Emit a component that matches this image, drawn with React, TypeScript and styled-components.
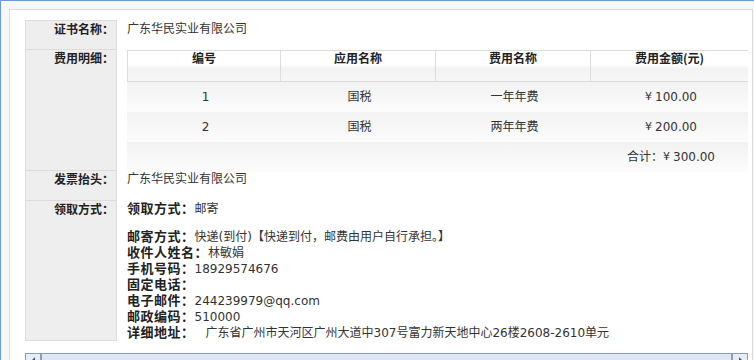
import styled, { createGlobalStyle } from 'styled-components';

type Fee = {
    no: number,
    app: string,
    name: string,
    amount: string
}

const fees: Fee[] = [
    { no: 1, app: '国税', name: '一年年费', amount: '100.00' },
    { no: 2, app: '国税', name: '两年年费', amount: '200.00' },
];

const contacts: [string, string][] = [
    ['邮寄方式：', '快递(到付)【快递到付，邮费由用户自行承担。】'],
    ['收件人姓名：', '林敏娟'],
    ['手机号码：', '18929574676'],
    ['固定电话：', ''],
    ['电子邮件：', '244239979@qq.com'],
    ['邮政编码：', '510000'],
];

const GlobalStyle = createGlobalStyle`
    html, body {
        margin: 0;
        padding: 0;
        background: #fff;
        overflow: hidden;
    }
    body {
        font-family: "DejaVu Sans", "Noto Sans CJK SC", sans-serif;
        font-size: 12px;
        color: #333;
    }
`;

const Frame = styled.div`
    width: 744px;
    padding: 8px;
    background: #f7f7f7;
    border-top: 1px solid #6b9bd6;
    border-left: 1px solid #6b9bd6;
`;

const Panel = styled.div`
    background: #fff;
    border: 1px solid #dcdcdc;
    padding: 10px 3px 0 15px;
`;

const Form = styled.div`
    display: grid;
    grid-template-columns: 92px 631px;
`;

const Label = styled.div<{ height: number, last?: boolean }>`
    height: ${props => props.height - 1}px;
    background: #eeeeee;
    border-top: 1px solid #dcdcdc;
    border-left: 1px solid #dcdcdc;
    border-right: 1px solid #dcdcdc;
    ${props => props.last ? 'border-bottom: 1px solid #dcdcdc;' : ''}
    box-sizing: content-box;
    padding: 0 2px 0 0;
    text-align: right;
    font-family: "Noto Sans CJK SC", sans-serif;
    font-weight: bold;
    font-size: 12px;
    line-height: 16px;
    color: #222;
    width: 88px;
`;

const Value = styled.div<{ height: number }>`
    height: ${props => props.height}px;
    padding: 0 0 0 10px;
    box-sizing: border-box;
    line-height: 16px;
    font-family: "Noto Sans CJK SC", sans-serif;
`;

const FeeTable = styled.div`
    width: 621px;
    margin-top: 1px;
    font-family: "DejaVu Sans", "Noto Sans CJK SC", sans-serif;
`;

const Grid = styled.div`
    display: grid;
    grid-template-columns: 153px 155px 155px 158px;
`;

const HeadRow = styled(Grid)`
    height: 30px;
    border-top: 1px solid #dcdcdc;
    border-bottom: 1px solid #dcdcdc;
    background: linear-gradient(#ffffff 0%, #ffffff 45%, #f3f3f3 60%, #f7f7f7 100%);
`;

const HeadCell = styled.div`
    border-left: 1px solid #dcdcdc;
    text-align: center;
    font-family: "Noto Sans CJK SC", sans-serif;
    font-weight: bold;
    font-size: 12px;
    line-height: 14px;
    color: #222;
`;

const BodyRow = styled(Grid)`
    height: 30px;
    background: linear-gradient(#f2f2f2, #fcfcfc);
`;

const Cell = styled.div<{ span?: number }>`
    grid-column: span ${props => props.span || 1};
    display: flex;
    align-items: center;
    justify-content: center;
    padding-left: 4px;
    color: #333;
    line-height: 14px;
`;

const Yen = styled.span`
    font-size: 11px;
    margin-right: 3px;
`;

// one "key: value" line of the delivery block, fixed to a 16px pitch
const Line = styled.div<{ gap?: number }>`
    display: flex;
    align-items: baseline;
    height: 16px;
    line-height: 16px;
    margin-top: ${props => props.gap || 0}px;
    white-space: nowrap;
`;

const Key = styled.b`
    font-size: 13px;
    letter-spacing: 0.5px;
    color: #222;
`;

const Text = styled.span<{ indent?: number }>`
    font-family: "DejaVu Sans", "Noto Sans CJK SC", sans-serif;
    font-size: 12px;
    margin-left: ${props => props.indent || 0}px;
`;

const Scrollbar = styled.div`
    display: flex;
    height: 17px;
    width: 723px;
    margin-top: 12px;
    border: 1px solid #8b9cbf;
    background: #dfe6f6;
    box-sizing: border-box;
`;

const ScrollButton = styled.div<{ side: 'left' | 'right' }>`
    width: 16px;
    flex: none;
    display: flex;
    justify-content: center;
    padding-top: 3px;
    box-sizing: border-box;
    background: #e7ecf7;
    ${props => props.side === 'left' ? 'border-right: 2px solid #8b9cbf;' : 'border-left: 2px solid #8b9cbf;'}
    &::after {
        content: '';
        width: 0;
        height: 0;
        border-top: 3px solid transparent;
        border-bottom: 3px solid transparent;
        ${props => props.side === 'left' ? 'border-right: 3px solid #4d5a78;' : 'border-left: 3px solid #4d5a78;'}
    }
`;

const Track = styled.div`
    flex: 1;
`;

const App = () => {
    return (
        <>
            <GlobalStyle />
            <Frame>
                <Panel>
                    <Form>
                        <Label height={29}>证书名称：</Label>
                        <Value height={29}>广东华民实业有限公司</Value>

                        <Label height={121}>费用明细：</Label>
                        <Value height={121}>
                            <FeeTable>
                                <HeadRow>
                                    <HeadCell>编号</HeadCell>
                                    <HeadCell>应用名称</HeadCell>
                                    <HeadCell>费用名称</HeadCell>
                                    <HeadCell>费用金额(元)</HeadCell>
                                </HeadRow>
                                {fees.map(fee => (
                                    <BodyRow key={fee.no}>
                                        <Cell>{fee.no}</Cell>
                                        <Cell>{fee.app}</Cell>
                                        <Cell>{fee.name}</Cell>
                                        <Cell><Yen>¥</Yen>{fee.amount}</Cell>
                                    </BodyRow>
                                ))}
                                <BodyRow>
                                    <Cell span={3} />
                                    <Cell>合计：<Yen>¥</Yen>300.00</Cell>
                                </BodyRow>
                            </FeeTable>
                        </Value>

                        <Label height={30}>发票抬头：</Label>
                        <Value height={30}>广东华民实业有限公司</Value>

                        <Label height={140} last>领取方式：</Label>
                        <Value height={140}>
                            <Line><Key>领取方式：</Key><Text>邮寄</Text></Line>
                            {contacts.map(([key, text], i) => (
                                <Line key={key} gap={i === 0 ? 12 : 0}>
                                    <Key>{key}</Key><Text>{text}</Text>
                                </Line>
                            ))}
                            <Line>
                                <Key>详细地址：</Key>
                                <Text indent={11}>广东省广州市天河区广州大道中307号富力新天地中心26楼2608-2610单元</Text>
                            </Line>
                        </Value>
                    </Form>
                    <Scrollbar>
                        <ScrollButton side="left" />
                        <Track />
                        <ScrollButton side="right" />
                    </Scrollbar>
                </Panel>
            </Frame>
        </>
    );
};

export default App;
